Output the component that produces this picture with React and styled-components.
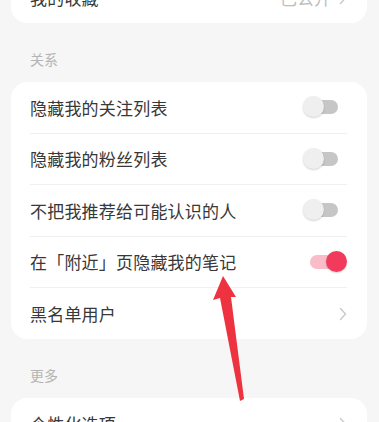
import styled, { createGlobalStyle } from "styled-components";

const Global = createGlobalStyle`
    html, body {
        margin: 0;
        padding: 0;
        background: #f6f6f6;
        overflow: hidden;
    }
    body {
        font-family: "Noto Sans CJK SC", "Noto Sans", sans-serif;
    }
`;

const Page = styled.div`
    position: relative;
    width: 379px;
    height: 422px;
    overflow: hidden;
    background: #f6f6f6;
`;

const Scroll = styled.div`
    margin-top: -28px;
    display: flex;
    flex-direction: column;
`;

const Card = styled.div`
    margin: 0 12px 0 11px;
    background: #ffffff;
    border-radius: 16px;
    padding: 0 20px 0 19px;
`;

const SectionLabel = styled.div`
    padding: 26px 0 0 30px;
    margin-bottom: 13px;
    height: 20px;
    line-height: 20px;
    font-size: 14px;
    color: #b4b4b4;
`;

const Row = styled.div`
    display: flex;
    align-items: center;
    justify-content: space-between;
    border-bottom: ${props => props.last ? "none" : "1px solid #f0f0f0"};
    box-sizing: border-box;
    height: ${props => props.last ? "51px" : "51.5px"};
`;

const Label = styled.span`
    font-size: 17px;
    color: #383838;
    letter-spacing: 0.2px;
`;

const Right = styled.div`
    display: flex;
    align-items: center;
    gap: 8px;
    font-size: 17px;
    color: #bdbdbd;
`;

const Switch = styled.div`
    position: relative;
    width: 44px;
    height: 22px;
`;

const Track = styled.div`
    position: absolute;
    left: 7px;
    top: 4px;
    width: 28px;
    height: 14px;
    border-radius: 7px;
    background: ${props => props.on ? "#f9bcc8" : "#c6c6c6"};
`;

const Knob = styled.div`
    position: absolute;
    top: 0;
    left: ${props => props.on ? "23px" : "0"};
    width: 21px;
    height: 21px;
    border-radius: 50%;
    background: ${props => props.on ? "#f23b5c" : "#efefef"};
    box-shadow: 0 1px 2px rgba(0, 0, 0, 0.18);
`;

const Chevron = () => (
    <svg width="8" height="14" viewBox="0 0 8 14">
        <path d="M1.5 1.5 L6.5 7 L1.5 12.5" fill="none" stroke="#c9c9c9" strokeWidth="1.4" strokeLinecap="round" strokeLinejoin="round" />
    </svg>
);

const Toggle = ({ on }) => (
    <Switch>
        <Track on={on ? 1 : 0} />
        <Knob on={on ? 1 : 0} />
    </Switch>
);

const ArrowMark = styled.svg`
    position: absolute;
    left: 0;
    top: 0;
    pointer-events: none;
`;

const relations = [
    { text: "隐藏我的关注列表", on: false },
    { text: "隐藏我的粉丝列表", on: false },
    { text: "不把我推荐给可能认识的人", on: false },
    { text: "在「附近」页隐藏我的笔记", on: true },
];

export default function App() {
    return (
        <Page>
            <Global />
            <Scroll>
                <Card>
                    <Row last>
                        <Label>我的收藏</Label>
                        <Right>已公开 <Chevron /></Right>
                    </Row>
                </Card>
                <SectionLabel>关系</SectionLabel>
                <Card>
                    {relations.map(r => (
                        <Row key={r.text}>
                            <Label>{r.text}</Label>
                            <Toggle on={r.on} />
                        </Row>
                    ))}
                    <Row last>
                        <Label>黑名单用户</Label>
                        <Chevron />
                    </Row>
                </Card>
                <SectionLabel>更多</SectionLabel>
                <Card>
                    <Row last>
                        <Label>个性化选项</Label>
                        <Chevron />
                    </Row>
                </Card>
            </Scroll>
            <ArrowMark width="379" height="422" viewBox="0 0 379 422">
                <polygon
                    points="223,276 236,297 231,297 244,399 240,401 220,298 213,300"
                    fill="#ee3340"
                />
            </ArrowMark>
        </Page>
    );
}
